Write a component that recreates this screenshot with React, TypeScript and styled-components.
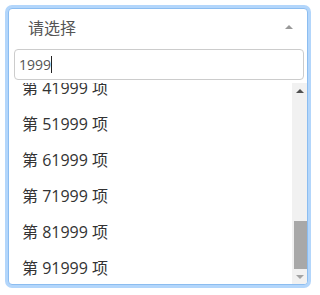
import React, { useEffect, useMemo, useRef, useState } from "react";
import styled, { createGlobalStyle } from "styled-components";

const ROW_HEIGHT = 36;
const VIEW_HEIGHT = 201;
const BUTTON_HEIGHT = 15;

const GlobalStyle = createGlobalStyle`
  html, body {
    margin: 0;
    padding: 0;
    background: #fff;
  }
  body {
    padding: 8px;
    font-family: "Open Sans", "Noto Sans CJK SC", sans-serif;
  }
`;

const SelectBox = styled.div`
  width: 300px;
  box-sizing: border-box;
  border: 1px solid #8cbdf0;
  border-radius: 4px;
  box-shadow: 0 0 0 3px #b3d6fb;
  background: #fff;
  overflow: hidden;
`;

const Header = styled.div`
  display: flex;
  align-items: center;
  justify-content: space-between;
  height: 39px;
  box-sizing: border-box;
  padding: 0 14px 4px 19px;
  color: #555;
  font-size: 16px;
  cursor: pointer;
`;

const Caret = styled.span<{ $color?: string; $down?: boolean }>`
  width: 0;
  height: 0;
  border-left: 4px solid transparent;
  border-right: 4px solid transparent;
  ${(p) =>
    p.$down
      ? `border-top: 4px solid ${p.$color || "#999"};`
      : `border-bottom: 4px solid ${p.$color || "#999"};`}
`;

const SearchWrap = styled.div`
  position: relative;
  padding: 1px 3px 3px 5px;
`;

const SearchInput = styled.input`
  display: block;
  width: 100%;
  box-sizing: border-box;
  height: 31px;
  border: 1px solid #ccc;
  border-radius: 4px;
  padding: 0 4px;
  font-family: "Open Sans", sans-serif;
  font-size: 14px;
  color: #555;
  outline: none;
  caret-color: transparent;
`;

const Mirror = styled.div`
  position: absolute;
  left: 10px;
  top: 1px;
  height: 31px;
  display: flex;
  align-items: center;
  font-family: "Open Sans", sans-serif;
  font-size: 14px;
  color: transparent;
  white-space: pre;
  pointer-events: none;
`;

const TextCursor = styled.span`
  display: inline-block;
  width: 1px;
  height: 17px;
  background: #222;
`;

const ListArea = styled.div`
  display: flex;
  height: ${VIEW_HEIGHT}px;
`;

const Viewport = styled.ul`
  flex: 1;
  list-style: none;
  margin: 0;
  padding: 0;
  overflow: hidden;
`;

const Item = styled.li`
  height: ${ROW_HEIGHT}px;
  line-height: ${ROW_HEIGHT + 4}px;
  padding: 0 13px;
  font-size: 16px;
  color: #333;
  white-space: nowrap;
`;

const ScrollBar = styled.div`
  width: 15px;
  display: flex;
  flex-direction: column;
  background: #f1f1f1;
`;

const ScrollButton = styled.div`
  height: ${BUTTON_HEIGHT}px;
  display: flex;
  align-items: center;
  justify-content: center;
  padding-left: 1px;
`;

const Track = styled.div`
  flex: 1;
  display: flex;
  flex-direction: column;
`;

const Thumb = styled.div`
  margin-left: 2px;
  background: #a8a8a8;
`;

export default function App() {
  const [query, setQuery] = useState("1999");
  const [scrollTop, setScrollTop] = useState(0);
  const inputRef = useRef<HTMLInputElement>(null);

  const items = useMemo(() => {
    const out: number[] = [];
    for (let i = 0; i < 100000; i++) {
      if (String(i).includes(query)) out.push(i);
    }
    return out;
  }, [query]);

  const total = items.length * ROW_HEIGHT;
  const maxScroll = Math.max(0, total - VIEW_HEIGHT);

  useEffect(() => {
    setScrollTop(maxScroll);
    inputRef.current?.focus();
  }, [maxScroll]);

  const top = Math.min(scrollTop, maxScroll);
  const start = Math.floor(top / ROW_HEIGHT);
  const offset = top - start * ROW_HEIGHT;
  const visible = items.slice(start, start + Math.ceil(VIEW_HEIGHT / ROW_HEIGHT) + 1);

  const trackLen = VIEW_HEIGHT - BUTTON_HEIGHT * 2;
  const thumbLen = total > VIEW_HEIGHT ? Math.max(16, Math.round((trackLen * VIEW_HEIGHT) / total)) : trackLen;
  const thumbTop = maxScroll ? Math.round(((trackLen - thumbLen) * top) / maxScroll) : 0;

  const scrollBy = (d: number) =>
    setScrollTop((s) => Math.max(0, Math.min(maxScroll, s + d)));

  return (
    <>
      <GlobalStyle />
      <SelectBox>
        <Header>
          <span>请选择</span>
          <Caret />
        </Header>
        <SearchWrap>
          <SearchInput
            ref={inputRef}
            value={query}
            onChange={(e) => setQuery(e.target.value)}
          />
          <Mirror>
            {query}
            <TextCursor />
          </Mirror>
        </SearchWrap>
        <ListArea>
          <Viewport onWheel={(e) => scrollBy(e.deltaY)}>
            {visible.map((n, i) => (
              <Item key={n} style={i === 0 ? { marginTop: -offset } : undefined}>
                第 {n} 项
              </Item>
            ))}
          </Viewport>
          <ScrollBar>
            <ScrollButton onClick={() => scrollBy(-ROW_HEIGHT)}>
              <Caret $color={top > 0 ? "#505050" : "#a3a3a3"} />
            </ScrollButton>
            <Track>
              <Thumb style={{ marginTop: thumbTop, height: thumbLen }} />
            </Track>
            <ScrollButton onClick={() => scrollBy(ROW_HEIGHT)}>
              <Caret $down $color={top < maxScroll ? "#505050" : "#a3a3a3"} />
            </ScrollButton>
          </ScrollBar>
        </ListArea>
      </SelectBox>
    </>
  );
}
